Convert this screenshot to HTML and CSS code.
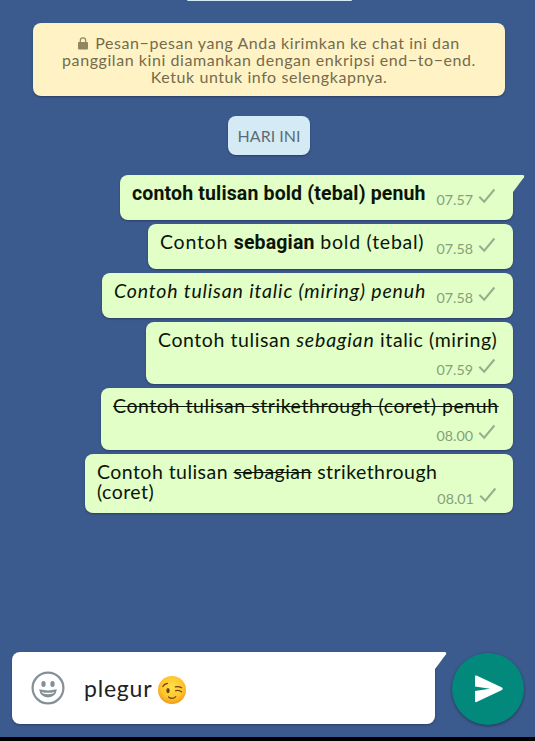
FILE: index.html
```
<!DOCTYPE html>
<html lang="id">
<head>
    <meta charset="UTF-8">
    <title>Chat</title>
    <link rel="stylesheet" href="styles.css">
</head>
<body>
    <svg class="sprite">
        <symbol id="check" viewBox="0 0 18 16">
            <path d="M1.3 8.8 L6.2 13.7 L16.4 1.5" fill="none" stroke="#93b08b" stroke-width="2"/>
        </symbol>
        <symbol id="tail" viewBox="0 0 12 18">
            <path d="M0 0 H10 Q12 .4 11 2.2 L0 17 Z"/>
        </symbol>
    </svg>

    <main class="chat">
        <div class="previous-date"></div>

        <div class="notice">
            <div class="notice-line">
                <svg class="lock" viewBox="0 0 10 13">
                    <path d="M2.3 6 V3.6 a2.7 2.7 0 0 1 5.4 0 V6" fill="none" stroke="#91875f" stroke-width="1.2"/>
                    <rect x="0" y="5" width="10" height="7.4" rx="1" fill="#91875f"/>
                </svg>
                <span>Pesan−pesan yang Anda kirimkan ke chat ini dan</span>
            </div>
            <div class="notice-line">panggilan kini diamankan dengan enkripsi end−to−end.</div>
            <div class="notice-line">Ketuk untuk info selengkapnya.</div>
        </div>

        <div class="date"><span>HARI INI</span></div>

        <div class="messages">
            <div class="bubble m1">
                <p class="text"><b>contoh tulisan bold (tebal) penuh</b></p>
                <div class="meta"><time>07.57</time><svg class="check"><use href="#check"/></svg></div>
                <svg class="tail"><use href="#tail"/></svg>
            </div>
            <div class="bubble m2">
                <p class="text">Contoh <b>sebagian</b> bold (tebal)</p>
                <div class="meta"><time>07.58</time><svg class="check"><use href="#check"/></svg></div>
            </div>
            <div class="bubble m3">
                <p class="text"><i>Contoh tulisan italic (miring) penuh</i></p>
                <div class="meta"><time>07.58</time><svg class="check"><use href="#check"/></svg></div>
            </div>
            <div class="bubble tall m4">
                <p class="text">Contoh tulisan <i>sebagian</i> italic (miring)</p>
                <div class="meta"><time>07.59</time><svg class="check"><use href="#check"/></svg></div>
            </div>
            <div class="bubble tall m5">
                <p class="text"><s>Contoh tulisan strikethrough (coret) penuh</s></p>
                <div class="meta"><time>08.00</time><svg class="check"><use href="#check"/></svg></div>
            </div>
            <div class="bubble two-line m6">
                <p class="text">Contoh tulisan <s>sebagian</s> strikethrough<br>(coret)</p>
                <div class="meta"><time>08.01</time><svg class="check"><use href="#check"/></svg></div>
            </div>
        </div>
    </main>

    <footer class="composer">
        <div class="input">
            <svg class="smiley" viewBox="0 0 34 34">
                <circle cx="17" cy="17" r="15.4" fill="none" stroke="#849095" stroke-width="2.2"/>
                <ellipse cx="12.5" cy="13" rx="2.2" ry="2.9" fill="#849095"/>
                <ellipse cx="21.5" cy="13" rx="2.2" ry="2.9" fill="#849095"/>
                <path d="M8.2 18.3 Q17 20.6 25.8 18.3 Q25 26.4 17 26.4 Q9 26.4 8.2 18.3 Z" fill="#849095"/>
                <path d="M10.6 20.9 Q17 22.6 23.4 20.9 L22.6 22.3 Q17 24 11.4 22.3 Z" fill="#fff"/>
            </svg>
            <span class="draft">plegur</span>
            <svg class="wink" viewBox="0 0 28 28">
                <defs>
                    <radialGradient id="face" cx=".5" cy=".4" r=".6">
                        <stop offset="0" stop-color="#ffe04a"/>
                        <stop offset=".65" stop-color="#fec62c"/>
                        <stop offset="1" stop-color="#f19a1b"/>
                    </radialGradient>
                </defs>
                <circle cx="14" cy="14" r="14" fill="url(#face)"/>
                <ellipse cx="10" cy="14.6" rx="1.7" ry="2.6" fill="#703f10"/>
                <g fill="none" stroke="#703f10" stroke-width="1.2" stroke-linecap="round">
                    <path d="M4.8 10.5 Q6.2 7.8 9.5 7.4"/>
                    <path d="M17.3 10.8 Q20.5 10 23.5 11.8"/>
                    <path d="M17.5 14.8 Q20.5 13.6 23.5 15.8"/>
                    <path d="M10.5 21 Q14.5 24 17.8 20.7"/>
                </g>
            </svg>
            <svg class="tail"><use href="#tail"/></svg>
        </div>
        <button class="send">
            <svg viewBox="0 0 28 28">
                <path d="M1.5 .5 L27 12.5 Q28.5 13.8 27 15 L1.5 27 Q0 27.5 0 26 V16 L15 13.8 L0 11.600 V1.5 Q0 0 1.5 .5 Z" fill="#fff"/>
            </svg>
        </button>
    </footer>
    <div class="navbar"></div>
</body>
</html>
```
FILE: styles.css
```
* {
    box-sizing: border-box;
}

body {
    margin: 0;
    height: 741px;
    display: flex;
    flex-direction: column;
    overflow: hidden;
    background-color: #3b5a8e;
    font-family: Lato, sans-serif;
}

.sprite {
    display: none;
}

.chat {
    flex: 1;
    display: flex;
    flex-direction: column;
    align-items: center;
    padding-left: 3px;
}

.previous-date {
    width: 165px;
    height: 1px;
    margin-bottom: 22px;
    background-color: #d4eaf5;
    border-radius: 0 0 4px 4px;
}

.notice {
    width: 472px;
    height: 73px;
    padding-top: 11px;
    border-radius: 8px;
    background-color: #fff3c5;
    box-shadow: 0 1px 2px rgba(0,0,0,0.3);
    color: #746b4c;
    font-size: 16px;
    line-height: 17px;
    letter-spacing: 0.57px;
}

.notice-line {
    display: flex;
    justify-content: center;
    white-space: nowrap;
}

.lock {
    width: 10px;
    height: 13px;
    margin: 3px 7px 0 0;
}

.date {
    display: flex;
    align-items: center;
    justify-content: center;
    width: 82px;
    height: 39px;
    margin: 20px 0;
    border-radius: 8px;
    background-color: #d4eaf5;
    box-shadow: 0 1px 2px rgba(0,0,0,0.3);
    color: #5d6d76;
    font-size: 16px;
}

.messages {
    display: flex;
    flex-direction: column;
    align-items: flex-end;
    align-self: stretch;
    gap: 4px;
    padding-right: 22px;
}

.bubble {
    position: relative;
    display: flex;
    justify-content: space-between;
    height: 45px;
    padding: 5px 17px 0 12px;
    border-radius: 8px;
    background-color: #e1ffc7;
    box-shadow: 0 1px 2px rgba(0,0,0,0.3);
}

.tall {
    height: 62px;
}

.two-line {
    height: 59px;
}

.m1 { width: 393px; border-top-right-radius: 0; }
.m2 { width: 365px; }
.m3 { width: 411px; }
.m4 { width: 367px; }
.m5 { width: 412px; }
.m6 { width: 428px; }

.text {
    margin: 0;
    color: #0b1406;
    font-size: 19.5px;
    line-height: 25px;
    letter-spacing: 0.57px;
    white-space: nowrap;
}

.text b {
    font-family: Roboto, sans-serif;
    letter-spacing: 0.15px;
}

.text i {
    letter-spacing: 0.84px;
}

.m2 .text {
    letter-spacing: 0.75px;
}

.m4 .text {
    margin-right: -8px;
}

.m5 .text {
    margin-right: -8px;
}

.m6 .text {
    letter-spacing: 0.45px;
}

.meta {
    display: flex;
    gap: 5px;
    height: 16px;
    margin-top: 12px;
    color: #87a078;
    font-size: 14.3px;
    line-height: 16px;
}

.tall,
.two-line {
    align-content: flex-start;
}

.tall {
    flex-wrap: wrap;
}

.tall .meta {
    margin: 10px 0 0 auto;
}

.two-line .text {
    line-height: 20px;
    padding-top: 3px;
}

.two-line .meta {
    margin-top: 32px;
}

.check {
    width: 18px;
    height: 16px;
    margin-top: -4px;
}

.tail {
    position: absolute;
    top: 0;
    left: 100%;
    width: 12px;
    height: 18px;
}

.bubble .tail {
    fill: #e1ffc7;
}

.composer {
    display: flex;
    align-items: center;
    gap: 17px;
    height: 85px;
    padding: 0 11px 13px 12px;
}

.input {
    position: relative;
    display: flex;
    align-items: center;
    width: 423px;
    height: 72px;
    padding-left: 19px;
    border-radius: 8px 0 8px 8px;
    background-color: #fff;
    box-shadow: 0 1px 2px rgba(0,0,0,0.3);
}

.input .tail {
    fill: #fff;
}

.smiley {
    width: 34px;
    height: 34px;
}

.draft {
    width: 93px;
    padding-left: 19px;
    color: #222;
    font-size: 23px;
    letter-spacing: 0.8px;
}

.wink {
    width: 28px;
    height: 28px;
    margin-top: 4px;
}

.send {
    display: flex;
    align-items: center;
    justify-content: center;
    width: 72px;
    height: 72px;
    margin-top: 2px;
    padding: 0;
    border: none;
    border-radius: 50%;
    background-color: #03897b;
    box-shadow: 0 1px 3px rgba(0,0,0,0.4);
}

.send svg {
    width: 28px;
    height: 28px;
    margin-left: 2px;
}

.navbar {
    height: 4px;
    background-color: #000;
}
```
